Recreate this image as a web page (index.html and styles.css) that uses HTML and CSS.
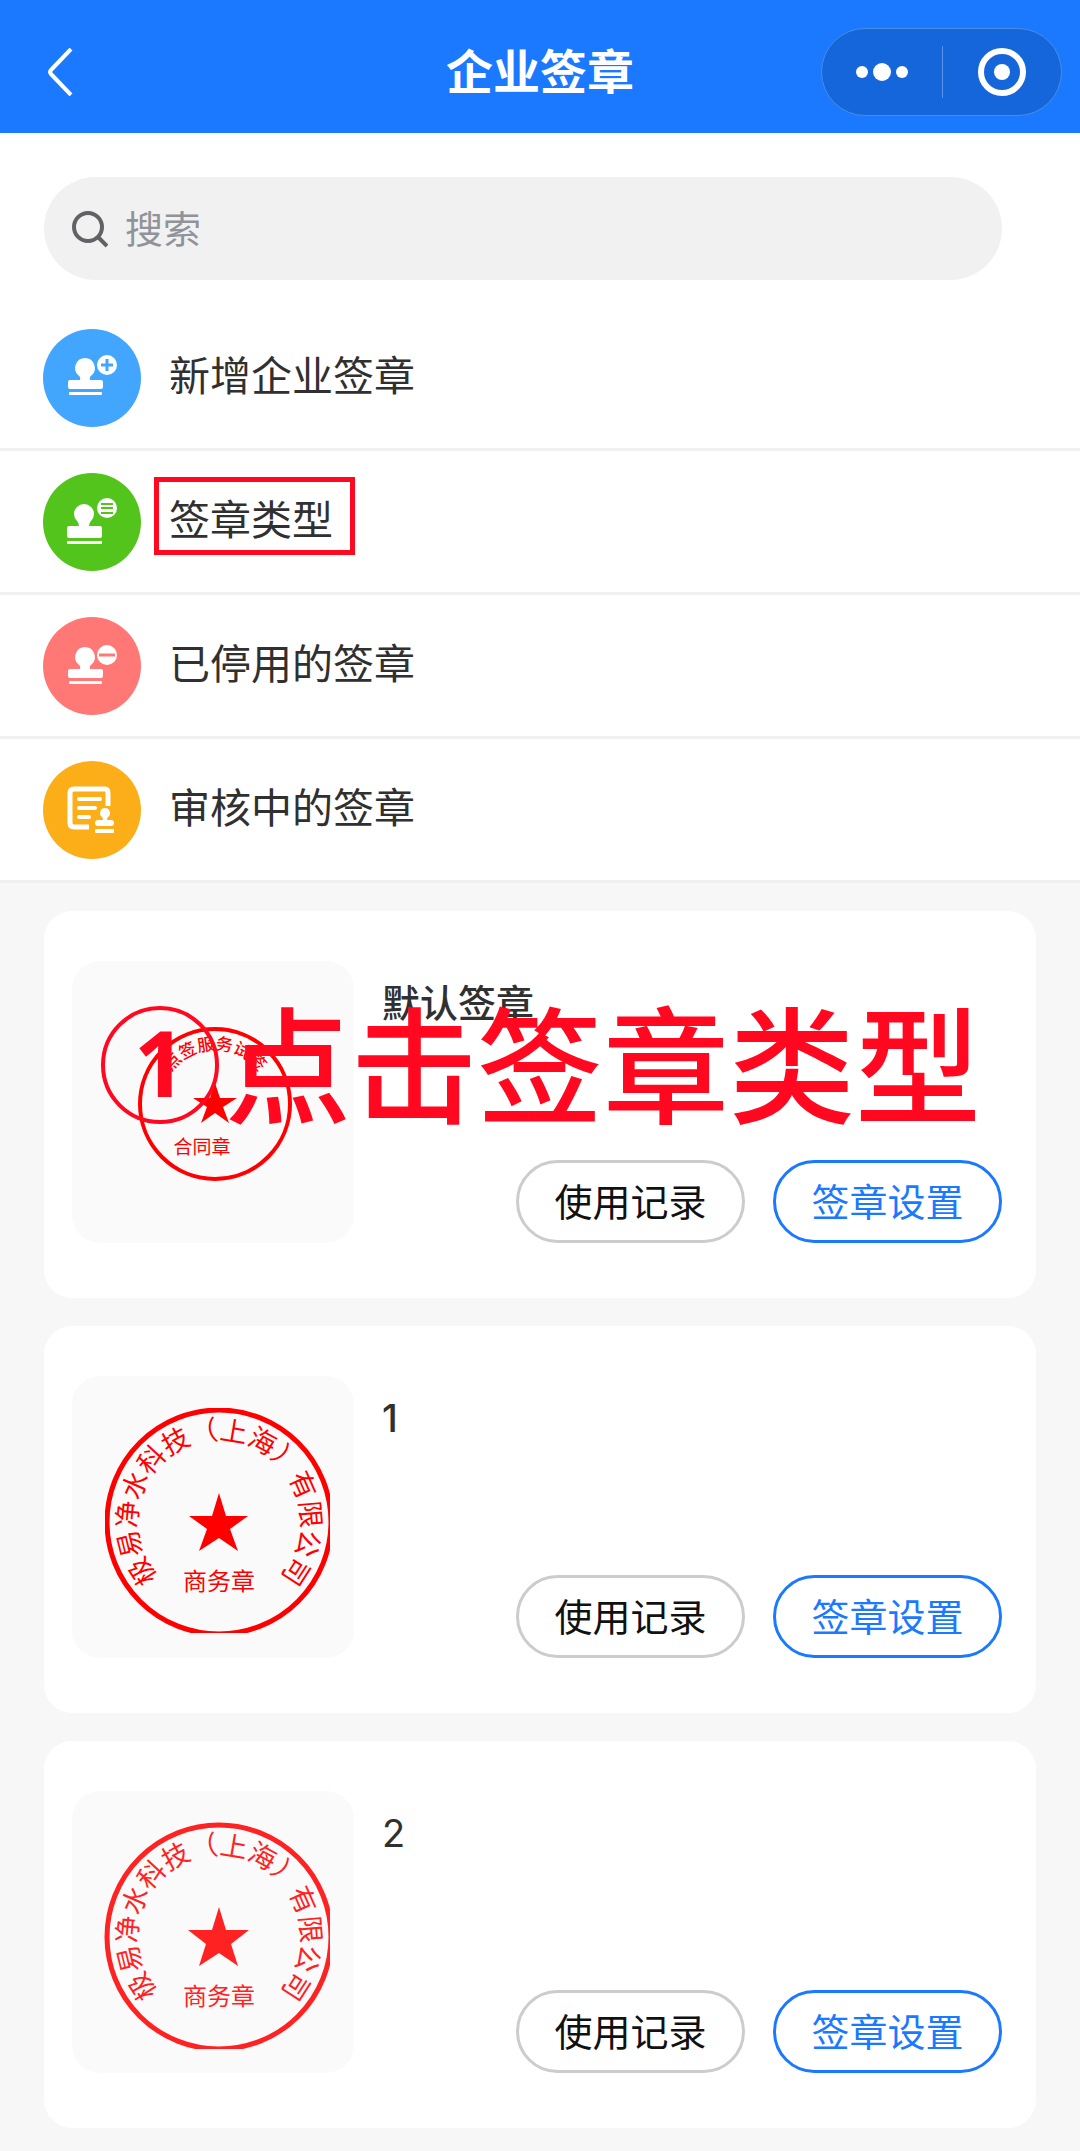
FILE: index.html
```html
<!DOCTYPE html>
<html lang="zh-CN">
<head>
<meta charset="utf-8">
<meta name="viewport" content="width=device-width, initial-scale=1">
<title>企业签章</title>
<link rel="stylesheet" href="styles.css">
</head>
<body>
<header class="navbar">
  <button class="back" type="button" aria-label="返回">
    <svg width="28" height="48" viewBox="0 0 28 48"><path d="M25 1 5 22Q3 24 5 26L25 47" fill="none" stroke="currentColor" stroke-width="4"/></svg>
  </button>
  <h1 class="navbar-title">企业签章</h1>
  <div class="capsule">
    <button type="button" aria-label="更多">
      <svg width="52" height="18" viewBox="0 0 52 18" fill="currentColor"><circle cx="6" cy="9" r="6"/><circle cx="26" cy="9" r="9"/><circle cx="46" cy="9" r="6"/></svg>
    </button>
    <button type="button" aria-label="关闭">
      <svg width="48" height="48" viewBox="0 0 48 48"><circle cx="24" cy="24" r="21" fill="none" stroke="currentColor" stroke-width="6"/><circle cx="24" cy="24" r="8" fill="currentColor"/></svg>
    </button>
  </div>
</header>

<main>
  <section class="top">
    <label class="search">
      <svg width="36" height="38" viewBox="0 0 36 38" fill="none" stroke="#606266" stroke-width="4"><circle cx="16" cy="17" r="14"/><path d="M26 27l9 9"/></svg>
      <input type="search" placeholder="搜索" aria-label="搜索">
    </label>
    <nav class="menu">
      <a class="menu-row" href="#add">
        <svg class="menu-icon" viewBox="0 0 99 99"><circle cx="50" cy="50" r="49" fill="#42a6ff"/>
          <g fill="#fff"><path d="M43 30a10 10 0 0 1 7 17q-3 2-2 5h11q2 0 2 2v5q0 2-2 2H28q-2 0-2-2v-5q0-2 2-2h10q1-3-2-5a10 10 0 0 1 7-17z"/><rect x="27" y="64" width="33" height="3" rx="1"/><circle cx="65" cy="37" r="10"/></g>
          <path d="M65 31v12M59 37h12" stroke="#42a6ff" stroke-width="3"/></svg>
        <span class="menu-text">新增企业签章</span>
      </a>
      <a class="menu-row" href="#types">
        <svg class="menu-icon" viewBox="0 0 99 99"><circle cx="50" cy="50" r="49" fill="#52c41b"/>
          <g fill="#fff"><path d="M42 32a10 10 0 0 1 10 10q0 4-3 7-2 2-2 5h11q2 0 2 2v8q0 2-2 2H27q-2 0-2-2v-8q0-2 2-2h10q0-3-2-5-3-3-3-7a10 10 0 0 1 10-10z"/><path d="M25 69h35v3H25z"/><circle cx="65" cy="36" r="10"/></g>
          <path d="M59 32h12M59 36h12M59 41h12" stroke="#52c41b" stroke-width="2"/></svg>
        <span class="menu-text menu-text-marked">签章类型</span>
      </a>
      <a class="menu-row" href="#disabled">
        <svg class="menu-icon" viewBox="0 0 99 99"><circle cx="50" cy="50" r="49" fill="#ff7875"/>
          <g fill="#fff"><path d="M43 31a10 10 0 0 1 7 17q-3 2-2 5h11q2 0 2 2v5q0 2-2 2H28q-2 0-2-2v-5q0-2 2-2h10q1-3-2-5a10 10 0 0 1 7-17z"/><rect x="27" y="65" width="33" height="3" rx="1"/><circle cx="65" cy="39" r="10"/></g>
          <path d="M57 39h16" stroke="#ff7875" stroke-width="3"/></svg>
        <span class="menu-text">已停用的签章</span>
      </a>
      <a class="menu-row" href="#review">
        <svg class="menu-icon" viewBox="0 0 99 99"><circle cx="50" cy="50" r="49" fill="#fbae17"/>
          <path d="M47 67H32q-4 0-4-4V33q0-4 4-4h31q3 0 3 4v13" fill="none" stroke="#fff" stroke-width="5"/>
          <path d="M37 39h21M37 48h16M37 57h10" stroke="#fff" stroke-width="4" stroke-linecap="round"/>
          <g fill="#fff"><path d="M63 48a5 5 0 0 1 3 9q-1 1-1 3h4q3 0 3 3t-3 3H56q-3 0-3-3t3-3h5q0-2-1-3a5 5 0 0 1 3-9z"/><rect x="53" y="69" width="19" height="4" rx="1"/></g></svg>
        <span class="menu-text">审核中的签章</span>
      </a>
    </nav>
  </section>

  <section class="cards">
    <article class="card">
      <div class="thumb">
        <svg viewBox="0 0 282 282" fill="#f00">
          <circle cx="143" cy="143" r="75" fill="none" stroke="#f00" stroke-width="4"/>
          <path id="arc-a" d="M143 197a54 54 0 0 1 0-108a54 54 0 0 1 0 108" fill="none"/>
          <text class="seal-arc-small"><textPath href="#arc-a" startOffset="50%">点签服务试签</textPath></text>
          <path d="M143 122l5 15h17l-14 9 6 16-14-10-14 10 6-16-14-9h17z"/>
          <text class="seal-label-small" x="130" y="193">合同章</text>
        </svg>
      </div>
      <div class="card-body">
        <h2 class="card-title">默认签章</h2>
        <div class="actions"><button class="pill" type="button">使用记录</button><button class="pill pill-primary" type="button">签章设置</button></div>
      </div>
      <div class="callout"><span class="callout-number">1</span><span>点击签章类型</span></div>
    </article>

    <article class="card">
      <div class="thumb">
        <svg viewBox="0 0 282 282" fill="#f00">
          <clipPath id="crop-b"><path d="M33 32h225v225H33z"/></clipPath>
          <circle cx="147" cy="146" r="112" fill="none" stroke="#f00" stroke-width="5" clip-path="url(#crop-b)"/>
          <path id="arc-b" d="M147 228a82 82 0 0 1 0-164a82 82 0 0 1 0 164" fill="none"/>
          <text class="seal-arc"><textPath href="#arc-b" startOffset="50%">极易净水科技（上海）有限公司</textPath></text>
          <path d="M147 117l7 23h22l-18 13 8 22-19-13-20 13 8-22-18-13h23z"/>
          <text class="seal-label" x="147" y="214">商务章</text>
        </svg>
      </div>
      <div class="card-body">
        <h2 class="card-title">1</h2>
        <div class="actions"><button class="pill" type="button">使用记录</button><button class="pill pill-primary" type="button">签章设置</button></div>
      </div>
    </article>

    <article class="card">
      <div class="thumb">
        <svg viewBox="0 0 282 282" fill="#ff2222">
          <clipPath id="crop-c"><path d="M32 31h226v227H32z"/></clipPath>
          <circle cx="147" cy="146" r="112" fill="none" stroke="#ff2222" stroke-width="5" clip-path="url(#crop-c)"/>
          <path id="arc-c" d="M147 228a82 82 0 0 1 0-164a82 82 0 0 1 0 164" fill="none"/>
          <text class="seal-arc"><textPath href="#arc-c" startOffset="50%">极易净水科技（上海）有限公司</textPath></text>
          <path d="M147 116l7 23h23l-18 14 7 22-19-13-20 13 7-22-18-14h24z"/>
          <text class="seal-label" x="147" y="214">商务章</text>
        </svg>
      </div>
      <div class="card-body">
        <h2 class="card-title card-title-regular">2</h2>
        <div class="actions"><button class="pill" type="button">使用记录</button><button class="pill pill-primary" type="button">签章设置</button></div>
      </div>
    </article>
  </section>
</main>
</body>
</html>
```
FILE: styles.css
```css
* { box-sizing: border-box; }

body {
  margin: 0;
  background: #f7f7f7;
  color: #303030;
  font-family: Inter, "Noto Sans CJK SC", sans-serif;
}

button { margin: 0; padding: 0; border: 0; background: none; color: inherit; font: inherit; }
svg { display: block; }

.navbar {
  display: grid;
  grid-template-columns: 1fr auto 1fr;
  align-items: center;
  height: 133px;
  padding: 10px 18px 0;
  background: #1a79ff;
  color: #fff;
}
.back { justify-self: start; margin-left: 28px; }
.navbar-title { margin: 0; font-size: 47px; font-weight: 700; line-height: 64px; }
.capsule {
  justify-self: end;
  display: grid;
  grid-template-columns: 1fr 1fr;
  align-items: center;
  width: 241px;
  height: 88px;
  border: 1px solid #4a8ee4;
  border-radius: 44px;
  background: #1666db;
}
.capsule button { display: grid; place-items: center; height: 52px; }
.capsule button + button { border-left: 1px solid #5c94e6; }

.top { padding-top: 44px; background: #fff; }
.search {
  display: flex;
  align-items: center;
  gap: 17px;
  height: 103px;
  margin: 0 78px 27px 44px;
  padding: 0 28px;
  border-radius: 52px;
  background: #f1f1f1;
}
.search input {
  flex: 1;
  min-width: 0;
  padding: 0 0 4px;
  border: 0;
  outline: 0;
  background: none;
  color: #303030;
  font: 38px/56px "Noto Sans CJK SC", sans-serif;
}
.search input::placeholder { color: #909399; opacity: 1; }

.menu-row {
  display: flex;
  align-items: center;
  gap: 28px;
  height: 144px;
  padding: 0 42px;
  border-bottom: 3px solid #f0f0f0;
  color: #303030;
  text-decoration: none;
}
.menu-icon { flex: none; width: 99px; height: 99px; }
.menu-text { position: relative; padding-bottom: 4px; font-size: 41px; line-height: 60px; }
.menu-text-marked::after {
  content: "";
  position: absolute;
  inset: -13px -22px -1px -15px;
  border: 5px solid #ff0820;
}

.cards { display: grid; gap: 28px; padding: 28px 44px 22px; }
.card {
  position: relative;
  display: flex;
  gap: 28px;
  padding: 50px 34px 55px 28px;
  border-radius: 28px;
  background: #fff;
}
.thumb { flex: none; width: 282px; border-radius: 28px; background: #fafafa; }
.card-body { flex: 1; display: flex; flex-direction: column; justify-content: space-between; padding-top: 14px; }
.card-title { margin: 0; font-size: 38px; font-weight: 500; line-height: 56px; }
.card-title-regular { font-weight: 400; }
.actions { display: flex; justify-content: flex-end; gap: 28px; }
.pill {
  width: 229px;
  height: 83px;
  border: 3px solid #ccc;
  border-radius: 42px;
  color: #111;
  font-size: 38px;
  line-height: 56px;
}
.pill-primary { border-color: #1a79ff; color: #1a79ff; }

.seal-arc, .seal-label, .seal-arc-small, .seal-label-small {
  font-family: "Noto Sans CJK SC", sans-serif;
  text-anchor: middle;
}
.seal-arc { font-size: 27px; }
.seal-label { font-size: 24px; }
.seal-arc-small { font-size: 17px; font-weight: 500; }
.seal-label-small { font-size: 19px; }

.callout {
  position: absolute;
  top: 95px;
  left: 57px;
  display: flex;
  align-items: flex-start;
  gap: 6px;
  color: #ff0820;
  font-family: "Noto Sans CJK SC", sans-serif;
  font-size: 126px;
  font-weight: 500;
  line-height: 106px;
  white-space: nowrap;
}
.callout-number {
  width: 118px;
  height: 118px;
  border: 4px solid;
  border-radius: 50%;
  font: 700 91px/104px "Open Sans", sans-serif;
  text-align: center;
}
```
